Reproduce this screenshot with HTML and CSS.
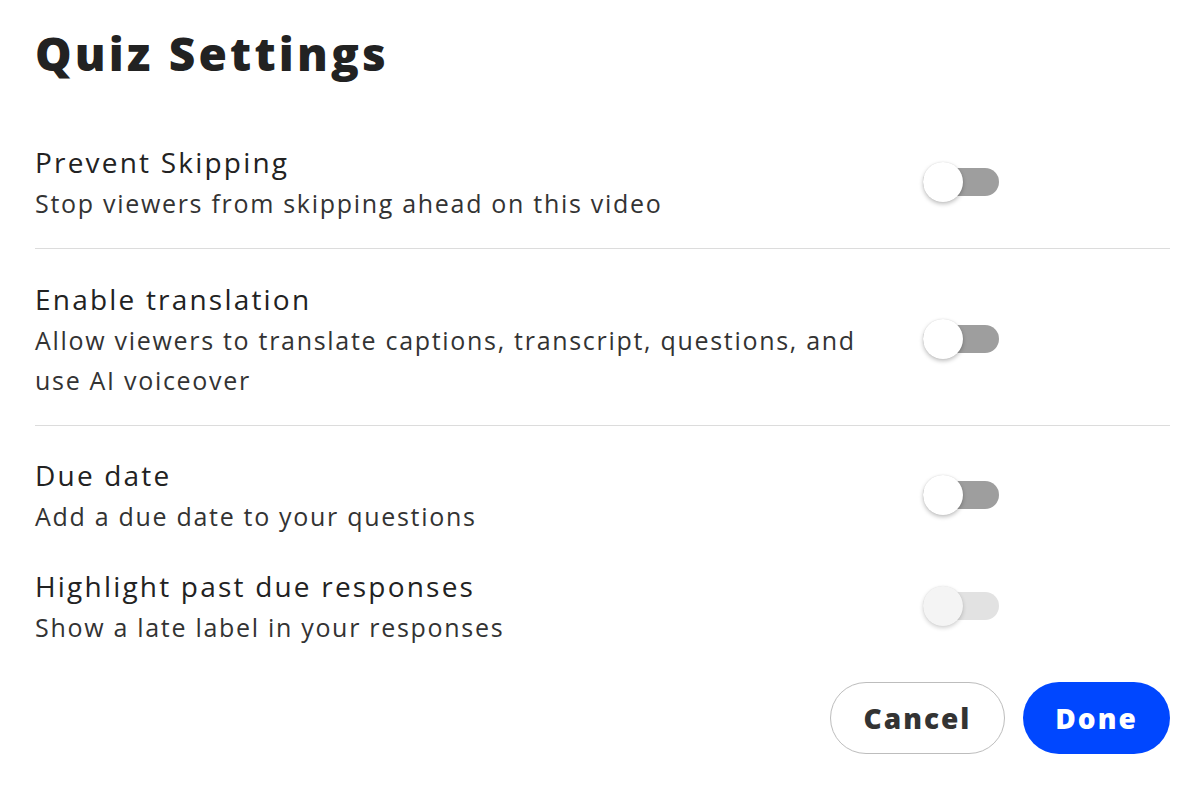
FILE: index.html
```html
<!DOCTYPE html>
<html lang="en">
<head>
<meta charset="utf-8">
<title>Quiz Settings</title>
<link rel="stylesheet" href="styles.css">
</head>
<body>
<div class="dialog">
  <h1 class="title">Quiz Settings</h1>

  <div class="section">
    <div class="row">
      <div class="text">
        <div class="label">Prevent Skipping</div>
        <div class="desc">Stop viewers from skipping ahead on this video</div>
      </div>
      <div class="toggle"><span class="knob"></span></div>
    </div>
  </div>

  <div class="section">
    <div class="row">
      <div class="text">
        <div class="label">Enable translation</div>
        <div class="desc">Allow viewers to translate captions, transcript, questions, and use AI voiceover</div>
      </div>
      <div class="toggle"><span class="knob"></span></div>
    </div>
  </div>

  <div class="section last">
    <div class="row">
      <div class="text">
        <div class="label">Due date</div>
        <div class="desc">Add a due date to your questions</div>
      </div>
      <div class="toggle"><span class="knob"></span></div>
    </div>
    <div class="row">
      <div class="text">
        <div class="label">Highlight past due responses</div>
        <div class="desc">Show a late label in your responses</div>
      </div>
      <div class="toggle disabled"><span class="knob"></span></div>
    </div>
  </div>

  <div class="actions">
    <button class="btn btn-cancel">Cancel</button>
    <button class="btn btn-done">Done</button>
  </div>
</div>
</body>
</html>
```

FILE: styles.css
```css
* { box-sizing: border-box; }

html, body {
  margin: 0;
  padding: 0;
  background: #ffffff;
}

body {
  font-family: "Open Sans", "Noto Sans", sans-serif;
  color: #222222;
}

.dialog {
  width: 1200px;
  padding: 25px 30px 0 35px;
}

.title {
  margin: 0;
  font-size: 46px;
  line-height: 57px;
  font-weight: 800;
  letter-spacing: 3.2px;
  color: #222222;
}

.section {
  border-bottom: 1px solid #dcdcdc;
  padding: 29px 0 25px;
}

.section:first-of-type {
  padding-top: 59px;
}

.section.last {
  border-bottom: none;
  padding-top: 28px;
  padding-bottom: 0;
  display: flex;
  flex-direction: column;
  gap: 29px;
}

.row {
  display: flex;
  align-items: center;
}

.text {
  width: 845px;
  margin-right: 43px;
}

.label {
  font-size: 28px;
  line-height: 42px;
  letter-spacing: 2.2px;
  color: #222222;
}

.desc {
  font-size: 25px;
  line-height: 40px;
  letter-spacing: 1.7px;
  color: #333333;
}

.toggle {
  position: relative;
  width: 76px;
  height: 28px;
  border-radius: 14px;
  background: #9e9e9e;
  flex: none;
}

.toggle .knob {
  position: absolute;
  left: 0;
  top: 50%;
  width: 40px;
  height: 40px;
  margin-top: -20px;
  border-radius: 50%;
  background: #ffffff;
  box-shadow: 0 2px 4px rgba(0, 0, 0, 0.25), 0 0 1px rgba(0, 0, 0, 0.15);
}

.toggle.disabled {
  background: #e2e2e2;
}

.toggle.disabled .knob {
  background: #f4f4f4;
  box-shadow: 0 2px 4px rgba(0, 0, 0, 0.18), 0 0 1px rgba(0, 0, 0, 0.1);
}

.actions {
  display: flex;
  justify-content: flex-end;
  gap: 18px;
  margin-top: 35px;
}

.btn {
  font-family: "Open Sans", "Noto Sans", sans-serif;
  font-size: 28px;
  font-weight: 800;
  letter-spacing: 2px;
  height: 72px;
  border-radius: 36px;
  cursor: pointer;
}

.btn-cancel {
  width: 175px;
  background: #ffffff;
  color: #333333;
  border: 1.5px solid #bdbdbd;
}

.btn-done {
  width: 147px;
  background: #0047ff;
  color: #ffffff;
  border: none;
}
```
